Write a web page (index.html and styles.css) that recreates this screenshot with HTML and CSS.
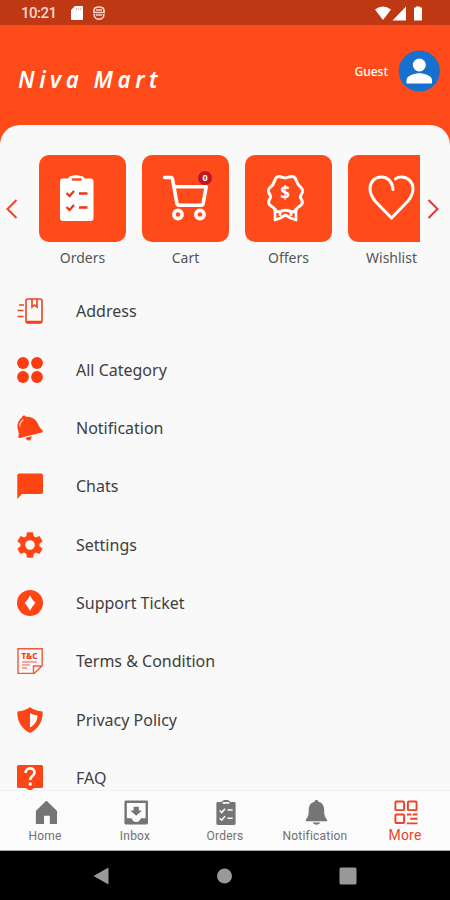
FILE: index.html
```html
<!DOCTYPE html>
<html lang="en">
<head>
    <meta charset="UTF-8">
    <meta name="viewport" content="width=device-width, initial-scale=1.0">
    <title>Niva Mart</title>
    <link rel="stylesheet" href="styles.css">
</head>
<body>
    <div class="status-bar">
        <span class="time">10:21</span>
        <svg class="sd-icon" width="12" height="14" viewBox="0 0 12 14"><path d="M4 0h7a1 1 0 0 1 1 1v12a1 1 0 0 1-1 1H1a1 1 0 0 1-1-1V4z" fill="#fff"/><path d="M5.500 2v2M7.500 2v2M9.500 2v2" stroke="#e3a793" stroke-width=".8"/></svg>
        <svg class="face-icon" width="12" height="14" viewBox="0 0 12 14" fill="none" stroke="#f6d4ca" stroke-width="1.700"><path d="M1 6V4.500C1 2 3 1 6 1s5 1 5 3.500V6M0 6.500h12M1.200 8v1a4.800 4.200 0 0 0 9.600 0V8"/><path d="M3 4h6M3 9h6" stroke-width="1.300"/></svg>
        <svg class="signal-icons" width="48" height="15" viewBox="0 0 48 15" fill="#fff"><path d="M0 3.500Q8-2.500 16 3.500L8 14zM31 .5V14.500H17.500z"/><path d="M39 1.500h2V.5h4v1h2V14.500h-8z"/></svg>
    </div>

    <header class="header">
        <h1>Niva Mart</h1>
        <span class="guest">Guest</span>
        <svg class="avatar" width="42" height="42" viewBox="0 0 42 42"><circle cx="21.300" cy="21" r="20.600" fill="#1870ce"/><g fill="#fff"><circle cx="21.300" cy="15" r="6.500"/><path d="M8.500 33.500V30c0-4.500 8.300-6.800 12.800-6.800S34 25.500 34 30v3.500z"/></g></svg>
    </header>

    <main class="panel">
        <section class="carousel">
            <svg class="arrow" width="12" height="20" viewBox="0 0 12 20"><path d="M10.500 1L1.500 10l9 9"/></svg>
            <div class="tiles">
                <div class="tile">
                    <div class="tile-box">
                        <svg width="87" height="87" viewBox="0 0 87 87"><path d="M24 23.500h5c1-2 2-2.500 4-2.500 1-1 7-1 8.500 0 2 0 3 .5 4 2.500h6a3 3 0 0 1 3 3V63a3 3 0 0 1-3 3H24a3 3 0 0 1-3-3V26.500a3 3 0 0 1 3-3z" fill="#fff"/><path d="M34 24.500h7.500" stroke="#ff4b19" stroke-width="2.500" stroke-linecap="round"/><path d="M27.500 38l3 3 4.500-5M40 38.500h8.500M27.500 52l3 3 4.500-5M40 52.500h8.500" fill="none" stroke="#ee3510" stroke-width="2.300"/></svg>
                    </div>
                    <span class="tile-name">Orders</span>
                </div>
                <div class="tile">
                    <div class="tile-box">
                        <svg width="87" height="87" viewBox="0 0 87 87" fill="none" stroke="#fff" stroke-width="3.600" stroke-linecap="round" stroke-linejoin="round"><path d="M22.500 22.500h6.200c1 0 1.600.7 1.800 1.700l4.400 24c.2 1.200 1 2 2.100 2h22c1.300 0 2-.8 2.200-2l3-16.500H32"/><circle cx="36" cy="59.500" r="4.100"/><circle cx="58" cy="59.500" r="4.100"/></svg>
                        <span class="badge">0</span>
                    </div>
                    <span class="tile-name">Cart</span>
                </div>
                <div class="tile">
                    <div class="tile-box">
                        <svg width="87" height="87" viewBox="0 0 87 87" fill="none" stroke="#fff" stroke-width="3" stroke-linejoin="round"><path d="M36.500 22c2.500 1.300 5 1.300 7.500 0 4-1.500 6.500 0 7.500 4 .8 3 2.500 5 4.500 6.500 2.500 2.500 2 4 .5 6.500s-1.500 3 0 5.500 1 4.500-1 6c-2.500 1.500-4 2.500-5 5-2 2.500-3.500 1.500-6 .5-2.500-.8-5.500-.8-8 0s-4.500 1.500-6-.5c-1-2.500-2.500-3.500-5-5-2-1.500-2.500-3.500-1-6s1.500-3 0-5.500-2-4 .5-6.500c2-1.500 3.700-3.500 4.500-6.500 1-4 3.500-5.500 7-4z"/><path d="M30 53v12l5.500-2 5-3 5 3 5.500 2V53M35 56v5M46 56v5" stroke-width="2.700"/></svg>
                        <span class="dollar">$</span>
                    </div>
                    <span class="tile-name">Offers</span>
                </div>
                <div class="tile">
                    <div class="tile-box">
                        <svg width="87" height="87" viewBox="0 0 87 87" fill="none" stroke="#fff" stroke-width="3" stroke-linecap="round" stroke-linejoin="round"><path d="M45 34.500c-.5-7.500-5-12.500-11.500-12.500-7 0-11.500 5-11.500 12 0 4.500 2 8 5 12l16.500 17L60 46c3.200-4 5-7.500 5-12 0-7-5-12-11.500-12-2.500 0-4.500.6-6 1.800"/></svg>
                    </div>
                    <span class="tile-name">Wishlist</span>
                </div>
            </div>
            <svg class="arrow arrow-right" width="12" height="20" viewBox="0 0 12 20"><path d="M1.500 1l9 9-9 9"/></svg>
        </section>

        <ul class="menu">
            <li>
                <svg viewBox="0 0 26 26" fill="none" stroke="#f3411f" stroke-width="1.600"><rect x="9" y="1" width="16" height="24" rx="2"/><path d="M15 1v8l2.500-2L20 9V1M2 7h5M.5 12.500h6M.5 18.500h6"/><path d="M10 24h14" stroke-width="2.500"/></svg>
                <span>Address</span>
            </li>
            <li>
                <svg viewBox="0 0 26 26" fill="#fa3c10"><circle cx="6" cy="6" r="5.900"/><circle cx="20" cy="6" r="5.900"/><circle cx="6" cy="20" r="5.900"/><circle cx="20" cy="20" r="5.900"/></svg>
                <span>All Category</span>
            </li>
            <li>
                <svg viewBox="0 0 26 26"><path d="M5 2.500C5-.2 8.300-.2 8.700 1.800 14 1.500 19 3.500 21 9c1 3.300 2.800 4.500 4.500 6.200.7.900.4 2-.7 2.300L3 23c-1.200.2-2-.7-1.500-2C2.500 18 .8 16 .5 12.500 0 8.500 2 4.500 5 2.500zM8.500 22.800l6-1.500c.5 4.500-4.500 5.700-6 1.500z" fill="#fd4214"/><path d="M2.800 11.500C2.800 8 4 6 6.500 4.700" fill="none" stroke="#ffc0ab" stroke-width="1.300"/></svg>
                <span>Notification</span>
            </li>
            <li>
                <svg viewBox="0 0 26 26"><path d="M2 .5h22a2 2 0 0 1 2 2V19a2 2 0 0 1-2 2H5L.3 26V2.500A2 2 0 0 1 2 .5z" fill="#ff4514"/></svg>
                <span>Chats</span>
            </li>
            <li>
                <svg viewBox="2.200 2.200 19.600 19.600"><path d="M19.140 12.940c.04-.3.060-.61.060-.94 0-.32-.02-.64-.07-.94l2.030-1.580c.18-.14.230-.41.120-.61l-1.920-3.320c-.12-.22-.37-.29-.59-.22l-2.390.960c-.5-.38-1.030-.7-1.620-.94L14.400 2.810c-.04-.24-.24-.41-.48-.41h-3.840c-.24 0-.43.170-.47.410L9.250 5.350c-.59.240-1.130.57-1.620.94L5.240 5.330c-.22-.08-.47 0-.59.220L2.740 8.870c-.12.210-.08.470.12.610l2.030 1.580c-.05.3-.09.630-.09.940s.02.640.070.940l-2.030 1.580c-.18.140-.23.410-.12.610l1.920 3.320c.12.220.37.290.59.220l2.390-.96c.5.380 1.030.7 1.620.94l.36 2.540c.05.240.24.410.48.410h3.840c.24 0 .44-.17.47-.41l.36-2.540c.59-.24 1.130-.56 1.620-.94l2.390.96c.22.080.47 0 .59-.22l1.920-3.320c.12-.22.070-.47-.12-.61zM12 15.600a3.600 3.600 0 1 1 0-7.200 3.600 3.600 0 0 1 0 7.200z" fill="#ff4514"/></svg>
                <span>Settings</span>
            </li>
            <li>
                <svg viewBox="0 0 26 26"><circle cx="13" cy="13" r="13" fill="#ff4514"/><path d="M13 5.200c1.400 3 3.200 5.500 5.500 7.800-2.300 2.300-4.100 4.800-5.500 7.800-1.400-3-3.200-5.500-5.500-7.800 2.300-2.300 4.100-4.800 5.500-7.800z" fill="#fff"/></svg>
                <span>Support Ticket</span>
            </li>
            <li>
                <svg viewBox="0 0 26 26" fill="none" stroke="#f4573a" stroke-width="1.400"><path d="M1 .8h24.200v17l-8 7.700H1zM25 18h-8.500v7.500"/><path d="M5 14h15M5 17h8M5 20h5" stroke-width="1"/><text class="tc" x="4.600" y="10.500">T&amp;C</text></svg>
                <span>Terms &amp; Condition</span>
            </li>
            <li>
                <svg viewBox="0 0 26 26"><path d="M13 .3C17 3 21 4 25.500 4.500 26.500 14 21 22 13 26 5 22-.5 14 .5 4.500 5 4 9 3 13 .3z" fill="#fd4516"/><path d="M13 6c2.500 1.500 5 2.300 7.500 2.500 0 5.500-3 9.500-7.500 12z" fill="#fff"/></svg>
                <span>Privacy Policy</span>
            </li>
            <li>
                <svg viewBox="0 0 26 26"><path d="M1.500 0h23A1.500 1.500 0 0 1 26 1.500v20a1.500 1.500 0 0 1-1.500 1.500H17l-4 3-4-3H1.500A1.500 1.500 0 0 1 0 21.500v-20A1.500 1.500 0 0 1 1.500 0z" fill="#fd4516"/><path d="M8.500 8c0-6 9-6 9-.7 0 3.500-4.300 3.700-4.300 7.700" fill="none" stroke="#fff" stroke-width="2.600"/><circle cx="13.200" cy="19" r="1.700" fill="#fff"/></svg>
                <span>FAQ</span>
            </li>
        </ul>
    </main>

    <nav class="tabs">
        <div class="tab">
            <svg viewBox="0 0 26 26"><path d="M13.500 1h1L25 11.500V25h-7.500v-8.500h-6V25H3V11.500z"/></svg>
            <span>Home</span>
        </div>
        <div class="tab">
            <svg viewBox="0 0 26 26"><path fill-rule="evenodd" d="M3 .5h22A1.500 1.500 0 0 1 26 2v22a1.500 1.500 0 0 1-1.500 1.500h-22A1.500 1.500 0 0 1 1.500 24V2A1.500 1.500 0 0 1 3 .5zM4 3v16h5c1 5 8.500 5 9.500 0h5V3zM11 7h5.500v4h3.200l-6 5.500-6-5.500H11z"/></svg>
            <span>Inbox</span>
        </div>
        <div class="tab">
            <svg viewBox="0 0 26 26"><path d="M5 2h4c1-2.500 8-2.500 9 0h4a1.500 1.500 0 0 1 1.500 1.500v21A1.500 1.500 0 0 1 22 26H5a1.500 1.500 0 0 1-1.500-1.500v-21A1.500 1.500 0 0 1 5 2z"/><path d="M10 3h7M7 11l2 2 3.500-4M15 10.500h5.500M7 19l2 2 3.500-4M15 19h5.500" fill="none" stroke="#fafafa" stroke-width="1.600"/></svg>
            <span>Orders</span>
        </div>
        <div class="tab">
            <svg viewBox="0 0 26 26"><path d="M12 1.700c0-2.300 4-2.300 4 0 4 .8 6 4 6 8.500 0 5 .5 7.500 3 10V22H3v-1.800c2.500-2.500 3-5 3-10 0-4.500 2-7.700 6-8.500zM10 23.500h8c-1.500 3-6.500 3-8 0z"/></svg>
            <span>Notification</span>
        </div>
        <div class="tab active">
            <svg viewBox="0 0 26 26" fill="none" stroke="#ed4428" stroke-width="2"><rect x="2.500" y="1.500" width="9" height="9" rx="1"/><rect x="15.500" y="1.500" width="9" height="9" rx="1"/><rect x="2.500" y="15" width="9" height="9" rx="1"/><path d="M14.500 15H19M20.500 15h5M18 19.500h7.500M14.500 24.300h11"/></svg>
            <span>More</span>
        </div>
    </nav>

    <div class="system-nav">
        <svg width="16" height="18" viewBox="0 0 16 18"><path d="M15.500 .5v17L.5 9z"/></svg>
        <svg width="16" height="16" viewBox="0 0 16 16"><circle cx="8.500" cy="8" r="7.500"/></svg>
        <svg width="18" height="18" viewBox="0 0 18 18"><rect x=".5" y=".5" width="17" height="17" rx="1.500"/></svg>
    </div>
</body>
</html>
```
FILE: styles.css
```css
* {
    box-sizing: border-box;
}
body {
    width: 450px;
    height: 900px;
    margin: 0;
    display: flex;
    flex-direction: column;
    overflow: hidden;
    background: #ff4b19;
    font-family: "Noto Sans", sans-serif;
}
svg {
    display: block;
    flex: none;
}
.status-bar {
    height: 25px;
    flex: none;
    display: flex;
    align-items: center;
    padding: 1px 27px 0 21px;
    background: #bd3813;
}
.time {
    width: 50px;
    color: #f9d8ce;
    font: 500 15px Roboto, sans-serif;
    letter-spacing: -0.5px;
}
.face-icon {
    margin-left: 10px;
}
.signal-icons {
    margin-left: auto;
}
.header {
    height: 100px;
    flex: none;
    display: flex;
    align-items: center;
    padding: 0 10px 8px 18px;
    color: #fff;
}
h1 {
    margin: 17px 0 0;
    font-size: 22.5px;
    line-height: 24px;
    font-style: italic;
    font-weight: 600;
    letter-spacing: 4.5px;
}
.guest {
    margin-left: auto;
    margin-right: 10px;
    font-size: 12px;
    font-weight: 500;
}
.panel {
    flex: 1;
    min-height: 0;
    overflow: hidden;
    padding-top: 30px;
    background: #f9f9f9;
    border-radius: 20px 20px 0 0;
}
.carousel {
    display: flex;
    height: 127px;
    padding: 0 10px 0 6px;
}
.arrow {
    margin-top: 44px;
    fill: none;
    stroke: #ee4421;
    stroke-width: 2;
}
.arrow-right {
    margin-left: 7px;
    stroke: #ee3030;
}
.tiles {
    width: 399px;
    margin-left: 3px;
    padding-left: 18px;
    display: flex;
    gap: 16px;
    overflow: hidden;
}
.tile {
    width: 87px;
    flex: none;
    text-align: center;
}
.tile-box {
    position: relative;
    height: 87px;
    border-radius: 10px;
    background: #ff4b19;
}
.tile-name {
    display: block;
    margin-top: 6px;
    color: #555;
    font-size: 14px;
    line-height: 20px;
}
.badge {
    position: absolute;
    top: 16px;
    left: 56px;
    width: 14px;
    height: 14px;
    border-radius: 50%;
    background: #bd1824;
    color: #fff;
    font-size: 9px;
    font-weight: 700;
    line-height: 14px;
}
.dollar {
    position: absolute;
    top: 28px;
    left: 30px;
    width: 20px;
    color: #fff;
    font-size: 17px;
    font-weight: 700;
    line-height: 20px;
}
.menu {
    margin: 0;
    padding: 0;
    list-style: none;
}
.menu li {
    height: 58.35px;
    display: flex;
    align-items: center;
    gap: 33px;
    padding-left: 17px;
    color: #3e3e3e;
    font-size: 16px;
}
.menu svg {
    width: 26px;
    height: 26px;
}
.tc {
    fill: #f03c20;
    stroke: none;
    font-size: 8px;
    font-weight: 800;
}
.tabs {
    height: 61px;
    flex: none;
    display: flex;
    border-top: 1px solid #f2f2f2;
    border-bottom: 1px solid #aaa;
    background: #fbfbfb;
}
.tab {
    flex: 1;
    display: flex;
    flex-direction: column;
    align-items: center;
    padding-top: 9px;
    color: #707070;
    font: 12px/16px Roboto, sans-serif;
    letter-spacing: 0.2px;
}
.tab svg {
    width: 25px;
    height: 25px;
    fill: #757575;
    margin-bottom: 3px;
}
.tab.active {
    color: #ed4428;
    font-size: 14px;
}
.tab.active svg {
    fill: none;
    margin-bottom: 2px;
}
.system-nav {
    height: 49px;
    flex: none;
    display: flex;
    align-items: center;
    justify-content: space-between;
    padding: 0 93px;
    background: #000;
    fill: #999;
}
```
